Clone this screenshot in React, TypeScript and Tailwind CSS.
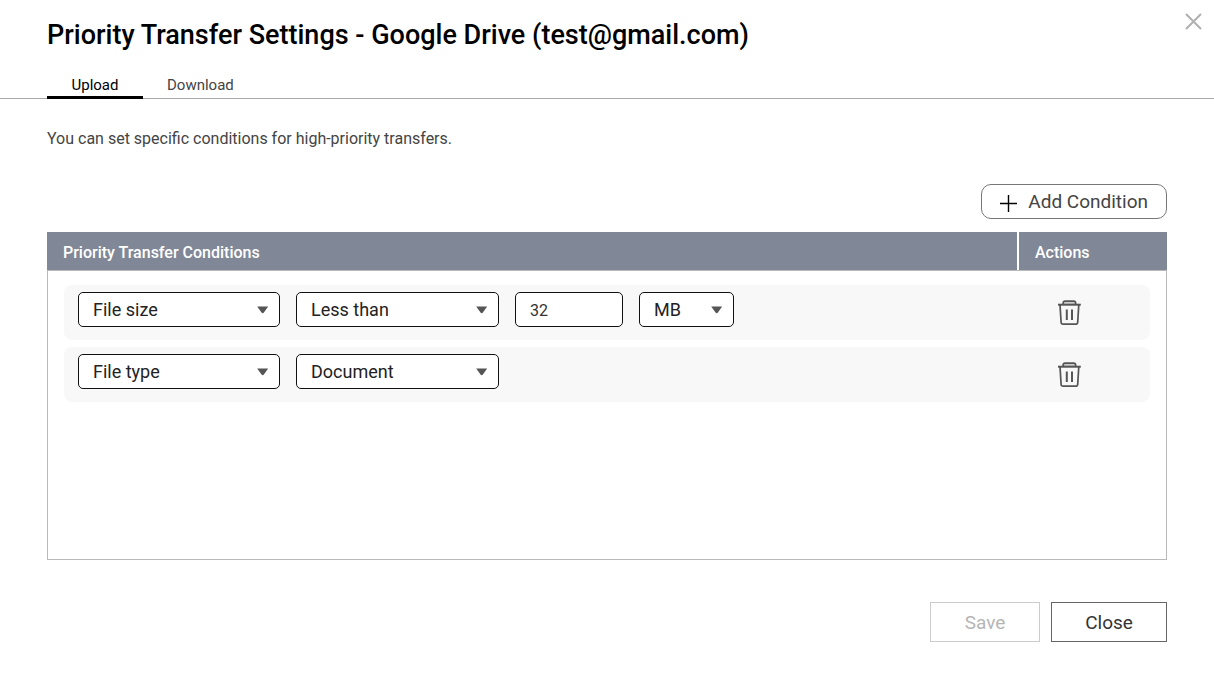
import { useState } from "react";

function Dropdown({
  label,
  options,
  className,
}: {
  label: string;
  options: string[];
  className: string;
}) {
  return (
    <div className={`relative ${className}`}>
      <select
        aria-label={label}
        className="block h-[35px] w-full appearance-none rounded-[5px] border border-[#111] bg-white pr-8 pl-3.5 text-lg leading-6 text-[#222]"
      >
        {options.map((option) => (
          <option key={option}>{option}</option>
        ))}
      </select>
      <svg
        viewBox="0 0 12 8"
        className="pointer-events-none absolute top-[14px] right-[11px] h-2 w-3"
        aria-hidden="true"
      >
        <path d="M0.2 0.5h11L6.9 6.6q-1.2 1.2-2.4 0z" fill="#555" />
      </svg>
    </div>
  );
}

function TrashIcon() {
  return (
    <svg
      viewBox="0 0 24 26"
      className="h-[26px] w-6"
      fill="none"
      stroke="#555"
      strokeWidth="1.7"
      aria-hidden="true"
    >
      <path d="M6.2 4.6V2.9q0-1.8 1.8-1.8h8.8q1.8 0 1.8 1.8v1.7" fill="#ccc" />
      <path d="M1 4.7h22.8" strokeWidth="2" />
      <path d="M3 4.6l1.1 17.6q0.1 2 2 2h12.6q1.9 0 2-2l1.1-17.6" />
      <path d="M9.8 9.4v10.6M15 9.4v10.6" strokeWidth="2" />
    </svg>
  );
}

const conditions = [
  { id: 1, field: "File size", operator: "Less than", value: "32", unit: "MB" },
  { id: 2, field: "File type", operator: "Document" },
];

const operators: Record<string, string[]> = {
  "Less than": ["Less than", "Greater than"],
  Document: ["Document", "Photo", "Video"],
};

export default function App() {
  const [tab, setTab] = useState("Upload");

  return (
    <main className="flex min-h-screen flex-col bg-white font-['Roboto',sans-serif] text-[#444]">
      <header className="border-b border-[#aaa]">
        <div className="flex items-start justify-between pr-3 pl-[47px]">
          <h1 className="pt-[18px] text-[27px] leading-[34px] font-medium text-black">
            Priority Transfer Settings - Google Drive (test@gmail.com)
          </h1>
          <button type="button" aria-label="Close dialog" className="mt-3 shrink-0">
            <svg viewBox="0 0 18 18" className="size-[18px]" aria-hidden="true">
              <path d="M2 2l15 15M17 2l-15 15" stroke="#b0b0b0" strokeWidth="2" />
            </svg>
          </button>
        </div>
        <div role="tablist" className="-mb-px flex pt-[18px] pl-[47px]">
          {["Upload", "Download"].map((name) => (
            <button
              key={name}
              type="button"
              role="tab"
              aria-selected={tab === name}
              onClick={() => setTab(name)}
              className={`min-w-24 border-b-[3px] px-6 pt-1 text-[15px] leading-[22px] ${
                tab === name ? "border-black text-black" : "border-transparent"
              }`}
            >
              {name}
            </button>
          ))}
        </div>
      </header>

      <section className="flex flex-1 flex-col px-[47px] pt-7 pb-[33px]">
        <p className="text-base leading-6">
          You can set specific conditions for high-priority transfers.
        </p>
        <button
          type="button"
          className="mt-[33px] flex h-[35px] items-center gap-2.5 self-end rounded-[10px] border border-[#777] px-[18px] pt-0.5 text-[19px]"
        >
          <svg viewBox="0 0 18 18" className="size-[18px]" aria-hidden="true">
            <path d="M8.5 1v17M0 9.5h17" stroke="#000" strokeWidth="1.4" />
          </svg>
          Add Condition
        </button>

        <table className="mt-[13px] w-full table-fixed border-separate border-spacing-0">
          <thead>
            <tr className="h-[38px] text-left text-base text-white">
              <th scope="col" className="bg-[#808797] px-4 pt-1 font-medium">
                Priority Transfer Conditions
              </th>
              <th
                scope="col"
                className="w-[150px] border-l-2 border-white bg-[#808797] px-4 pt-1 font-medium"
              >
                Actions
              </th>
            </tr>
          </thead>
          <tbody>
            {conditions.map((c) => (
              <tr
                key={c.id}
                className="[&>td]:pt-[7px] first:[&>td]:border-t first:[&>td]:pt-[14px]"
              >
                <td className="border-l border-[#b9b9b9] pl-4">
                  <div className="flex h-[55px] items-start gap-4 rounded-l-lg bg-[#f8f8f8] pt-[7px] pl-3.5">
                    <Dropdown
                      label="Condition"
                      className="w-[202px]"
                      options={c.id === 1 ? ["File size", "File type"] : ["File type", "File size"]}
                    />
                    <Dropdown
                      label="Comparison"
                      className="w-[203px]"
                      options={operators[c.operator]}
                    />
                    {c.value && (
                      <input
                        type="text"
                        aria-label="Size"
                        defaultValue={c.value}
                        className="h-[35px] w-[108px] rounded-[5px] border border-[#111] bg-white px-3.5 pt-0.5 text-base text-[#333]"
                      />
                    )}
                    {c.unit && (
                      <Dropdown label="Unit" className="w-[95px]" options={["MB", "KB", "GB"]} />
                    )}
                  </div>
                </td>
                <td className="border-r border-[#b9b9b9] pr-4">
                  <div className="flex h-[55px] items-center rounded-r-lg bg-[#f8f8f8] pl-10">
                    <button type="button" aria-label={`Delete ${c.field} condition`}>
                      <TrashIcon />
                    </button>
                  </div>
                </td>
              </tr>
            ))}
          </tbody>
        </table>
        <div className="flex-1 border-x border-b border-[#b9b9b9]" />

        <footer className="mt-[42px] flex justify-end gap-[11px] text-[19px]">
          <button
            type="button"
            disabled
            className="h-10 w-[110px] border border-[#ccc] pt-0.5 text-[#b5b5b5]"
          >
            Save
          </button>
          <button type="button" className="h-10 w-[116px] border border-[#666] pt-0.5 text-[#333]">
            Close
          </button>
        </footer>
      </section>
    </main>
  );
}
